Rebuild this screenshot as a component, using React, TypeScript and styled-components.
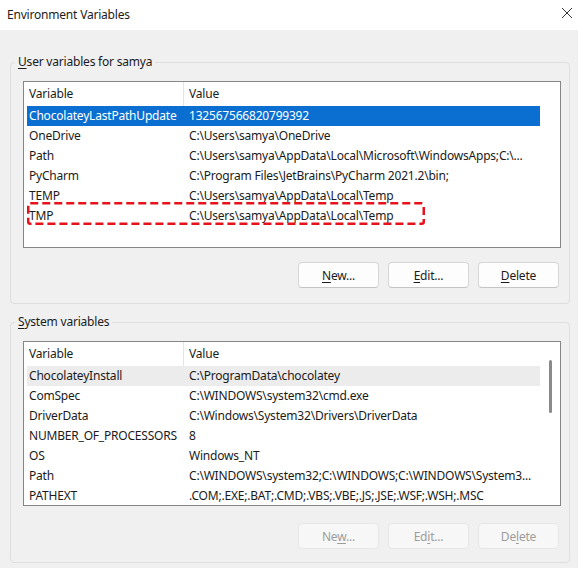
import React from 'react';
import styled, { createGlobalStyle } from 'styled-components';

const GlobalStyle = createGlobalStyle`
  html, body {
    margin: 0;
    padding: 0;
    background: #f0f0f0;
  }
  * {
    box-sizing: border-box;
  }
`;

type RowState = 'selected' | 'hover' | undefined;

interface VarRow {
  name: string;
  value: string;
  state?: RowState;
}

const userVars: VarRow[] = [
  { name: 'ChocolateyLastPathUpdate', value: '132567566820799392', state: 'selected' },
  { name: 'OneDrive', value: String.raw`C:\Users\samya\OneDrive` },
  { name: 'Path', value: String.raw`C:\Users\samya\AppData\Local\Microsoft\WindowsApps;C:\...` },
  { name: 'PyCharm', value: String.raw`C:\Program Files\JetBrains\PyCharm 2021.2\bin;` },
  { name: 'TEMP', value: String.raw`C:\Users\samya\AppData\Local\Temp` },
  { name: 'TMP', value: String.raw`C:\Users\samya\AppData\Local\Temp` },
];

const systemVars: VarRow[] = [
  { name: 'ChocolateyInstall', value: String.raw`C:\ProgramData\chocolatey`, state: 'hover' },
  { name: 'ComSpec', value: String.raw`C:\WINDOWS\system32\cmd.exe` },
  { name: 'DriverData', value: String.raw`C:\Windows\System32\Drivers\DriverData` },
  { name: 'NUMBER_OF_PROCESSORS', value: '8' },
  { name: 'OS', value: 'Windows_NT' },
  { name: 'Path', value: String.raw`C:\WINDOWS\system32;C:\WINDOWS;C:\WINDOWS\System3...` },
  { name: 'PATHEXT', value: '.COM;.EXE;.BAT;.CMD;.VBS;.VBE;.JS;.JSE;.WSF;.WSH;.MSC' },
];

const Window = styled.div`
  width: 578px;
  height: 568px;
  background: #f0f0f0;
  font-family: 'Noto Sans', 'Open Sans', sans-serif;
  font-size: 12px;
  letter-spacing: -0.2px;
  color: #1b1b1b;
  overflow: hidden;
`;

const TitleBar = styled.div`
  height: 30px;
  background: #ffffff;
  display: flex;
  align-items: center;
  justify-content: space-between;
  padding: 0 5px 2px 7px;
`;

const Title = styled.span`
  font-size: 12px;
  color: #1b1b1b;
`;

const CloseIcon = styled.svg`
  width: 12px;
  height: 12px;
  margin-top: -2px;
`;

const Body = styled.div`
  padding: 24px 8px 0 10px;
  display: flex;
  flex-direction: column;
  gap: 10px;
`;

const Group = styled.fieldset<{ $bottom: number }>`
  margin: 0;
  min-width: 0;
  border: 1px solid #dedede;
  border-radius: 4px;
  padding: 11px 8px ${(p) => p.$bottom}px 12px;
  display: flex;
  flex-direction: column;
`;

const GroupLabel = styled.legend`
  padding: 0 3px;
  margin-left: -8px;
  line-height: 16px;
  font-size: 12px;
  color: #1b1b1b;
`;

const Accel = styled.span`
  text-decoration: underline;
  text-underline-offset: 2px;
`;

const ListBox = styled.div<{ $height: number }>`
  height: ${(p) => p.$height}px;
  border: 1px solid #868686;
  background: #ffffff;
  display: flex;
  overflow: hidden;
`;

const ListMain = styled.div`
  position: relative;
  flex: 1;
  min-width: 0;
  display: flex;
  flex-direction: column;
`;

const HeaderRow = styled.div`
  display: flex;
  height: 24px;
  flex-shrink: 0;
`;

const HeaderCell = styled.div<{ $width?: number }>`
  ${(p) => (p.$width ? `width: ${p.$width}px; border-right: 1px solid #e5e5e5;` : 'flex: 1;')}
  padding-left: 5px;
  line-height: 24px;
  white-space: nowrap;
`;

const Row = styled.div<{ $state?: RowState }>`
  display: flex;
  height: 20px;
  flex-shrink: 0;
  margin-left: 3px;
  line-height: 20px;
  white-space: nowrap;
  background: ${(p) =>
    p.$state === 'selected' ? '#0a6fd0' : p.$state === 'hover' ? '#ececec' : 'transparent'};
  color: ${(p) => (p.$state === 'selected' ? '#ffffff' : '#1b1b1b')};
`;

const NameCell = styled.div`
  width: 156px;
  flex-shrink: 0;
  padding-left: 2px;
  overflow: hidden;
`;

const ValueCell = styled.div`
  flex: 1;
  min-width: 0;
  padding-left: 6px;
  overflow: hidden;
`;

const ScrollTrack = styled.div`
  width: 20px;
  flex-shrink: 0;
  display: flex;
  justify-content: center;
  padding: 18px 0 0 1px;
`;

const ScrollThumb = styled.div`
  width: 3px;
  height: 53px;
  border-radius: 2px;
  background: #8a8a8a;
`;

const Highlight = styled.svg`
  position: absolute;
  left: 3px;
  top: 120px;
  width: 398px;
  height: 23px;
  overflow: visible;
`;

const ButtonRow = styled.div<{ $top: number }>`
  display: flex;
  justify-content: flex-end;
  gap: 9px;
  margin-top: ${(p) => p.$top}px;
  padding-right: 2px;
`;

const Button = styled.button`
  width: 81px;
  height: 26px;
  font-family: inherit;
  font-size: 12px;
  letter-spacing: inherit;
  color: #1b1b1b;
  background: #fdfdfd;
  border: 1px solid #d6d6d6;
  border-bottom-color: #c4c4c4;
  border-radius: 4px;
  padding: 0;

  &:disabled {
    color: #9d9d9d;
    background: #f7f7f7;
    border-color: #e6e6e6;
  }
`;

const VarList: React.FC<{ rows: VarRow[]; height: number; scroll?: boolean; marked?: boolean }> = ({
  rows,
  height,
  scroll,
  marked,
}) => (
  <ListBox $height={height}>
    <ListMain>
      <HeaderRow>
        <HeaderCell $width={160}>Variable</HeaderCell>
        <HeaderCell>Value</HeaderCell>
      </HeaderRow>
      {rows.map((r) => (
        <Row key={r.name} $state={r.state}>
          <NameCell>{r.name}</NameCell>
          <ValueCell>{r.value}</ValueCell>
        </Row>
      ))}
      {marked && (
        <Highlight viewBox="0 0 398 23">
          <rect
            x="1.25"
            y="1.25"
            width="395.5"
            height="20.5"
            rx="2"
            fill="none"
            stroke="#e8101a"
            strokeWidth="2.5"
            strokeDasharray="8 4"
          />
        </Highlight>
      )}
    </ListMain>
    <ScrollTrack>{scroll && <ScrollThumb />}</ScrollTrack>
  </ListBox>
);

export default function App() {
  return (
    <Window>
      <GlobalStyle />
      <TitleBar>
        <Title>Environment Variables</Title>
        <CloseIcon viewBox="0 0 12 12">
          <path d="M1 1 L11 11 M11 1 L1 11" stroke="#333" strokeWidth="1" />
        </CloseIcon>
      </TitleBar>
      <Body>
        <Group $bottom={15}>
          <GroupLabel>
            <Accel>U</Accel>ser variables for samya
          </GroupLabel>
          <VarList rows={userVars} height={167} marked />
          <ButtonRow $top={14}>
            <Button>
              <Accel>N</Accel>ew...
            </Button>
            <Button>
              <Accel>E</Accel>dit...
            </Button>
            <Button>
              <Accel>D</Accel>elete
            </Button>
          </ButtonRow>
        </Group>
        <Group $bottom={13}>
          <GroupLabel>
            <Accel>S</Accel>ystem variables
          </GroupLabel>
          <VarList rows={systemVars} height={165} scroll />
          <ButtonRow $top={17}>
            <Button disabled>
              Ne<Accel>w</Accel>...
            </Button>
            <Button disabled>
              Ed<Accel>i</Accel>t...
            </Button>
            <Button disabled>
              De<Accel>l</Accel>ete
            </Button>
          </ButtonRow>
        </Group>
      </Body>
    </Window>
  );
}
